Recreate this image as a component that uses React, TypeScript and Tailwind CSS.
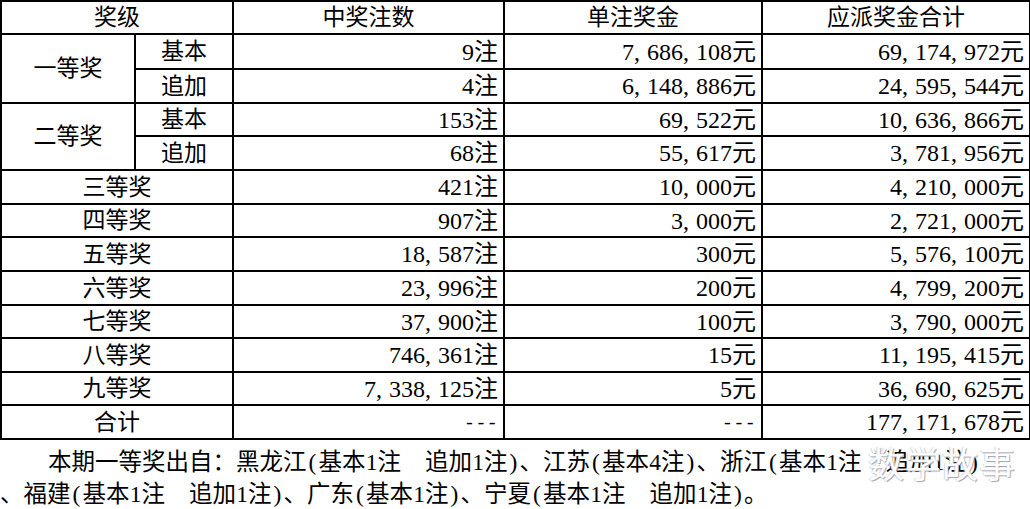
import React from "react";

// numbers like "7,338,125" -> digits with a half-width comma cell, like the source's SimSun
function Num({ v, unit }: { v: string; unit: string }) {
  const parts = v.split(",");
  return (
    <span className="text-[24px]">
      {parts.map((p, i) => (
        <React.Fragment key={i}>
          {i > 0 && <span className="inline-block w-[13px] text-left">,</span>}
          {p}
        </React.Fragment>
      ))}
      {unit}
    </span>
  );
}

// half-width ascii gets a fixed 12px cell
function Line({ text }: { text: string }) {
  const out: React.ReactNode[] = [];
  let buf = "";
  [...text].forEach((ch, i) => {
    if (ch.charCodeAt(0) < 128) {
      if (buf) {
        out.push(buf);
        buf = "";
      }
      out.push(
        <span key={i} className="inline-block w-[12px] text-center">
          {ch === " " ? "\u00a0" : ch}
        </span>
      );
    } else buf += ch;
  });
  if (buf) out.push(buf);
  return <>{out}</>;
}

const rows: { label: string; count: string; unit: string; total: string; h: string }[] = [
  { label: "三等奖", count: "421", unit: "10,000", total: "4,210,000", h: "h-[34px]" },
  { label: "四等奖", count: "907", unit: "3,000", total: "2,721,000", h: "h-[33px]" },
  { label: "五等奖", count: "18,587", unit: "300", total: "5,576,100", h: "h-[34px]" },
  { label: "六等奖", count: "23,996", unit: "200", total: "4,799,200", h: "h-[34px]" },
  { label: "七等奖", count: "37,900", unit: "100", total: "3,790,000", h: "h-[33px]" },
  { label: "八等奖", count: "746,361", unit: "15", total: "11,195,415", h: "h-[34px]" },
  { label: "九等奖", count: "7,338,125", unit: "5", total: "36,690,625", h: "h-[33px]" },
];

const cell = "border-2 border-black p-0 leading-none";
const num = cell + " text-right pr-[5px]";
const mid = cell + " text-center";

export default function App() {
  return (
    <div
      className="w-[1030px] h-[509px] bg-white text-black overflow-hidden relative"
      style={{ fontFamily: '"Liberation Serif", "Noto Sans CJK SC", serif' }}
    >
      <table className="table-fixed border-collapse w-[1029px] text-[23px] border-t border-t-black">
        <colgroup>
          <col className="w-[134px]" />
          <col className="w-[98px]" />
          <col className="w-[271px]" />
          <col className="w-[258px]" />
          <col className="w-[268px]" />
        </colgroup>
        <tbody>
          <tr className="h-[33px]">
            <td colSpan={2} className={mid}>奖级</td>
            <td className={mid}>中奖注数</td>
            <td className={mid}>单注奖金</td>
            <td className={mid}>应派奖金合计</td>
          </tr>
          <tr className="h-[35px]">
            <td rowSpan={2} className={mid}>一等奖</td>
            <td className={mid}>基本</td>
            <td className={num}><Num v="9" unit="注" /></td>
            <td className={num}><Num v="7,686,108" unit="元" /></td>
            <td className={num}><Num v="69,174,972" unit="元" /></td>
          </tr>
          <tr className="h-[34px]">
            <td className={mid}>追加</td>
            <td className={num}><Num v="4" unit="注" /></td>
            <td className={num}><Num v="6,148,886" unit="元" /></td>
            <td className={num}><Num v="24,595,544" unit="元" /></td>
          </tr>
          <tr className="h-[33px]">
            <td rowSpan={2} className={mid}>二等奖</td>
            <td className={mid}>基本</td>
            <td className={num}><Num v="153" unit="注" /></td>
            <td className={num}><Num v="69,522" unit="元" /></td>
            <td className={num}><Num v="10,636,866" unit="元" /></td>
          </tr>
          <tr className="h-[34px]">
            <td className={mid}>追加</td>
            <td className={num}><Num v="68" unit="注" /></td>
            <td className={num}><Num v="55,617" unit="元" /></td>
            <td className={num}><Num v="3,781,956" unit="元" /></td>
          </tr>
          {rows.map((r) => (
            <tr key={r.label} className={r.h}>
              <td colSpan={2} className={mid}>{r.label}</td>
              <td className={num}><Num v={r.count} unit="注" /></td>
              <td className={num}><Num v={r.unit} unit="元" /></td>
              <td className={num}><Num v={r.total} unit="元" /></td>
            </tr>
          ))}
          <tr className="h-[34px]">
            <td colSpan={2} className={mid}>合计</td>
            <td className={num}>
              <span style={{ fontFamily: '"Liberation Mono", monospace' }} className="text-[19px]">---</span>
            </td>
            <td className={num}>
              <span style={{ fontFamily: '"Liberation Mono", monospace' }} className="text-[19px]">---</span>
            </td>
            <td className={num}><Num v="177,171,678" unit="元" /></td>
          </tr>
        </tbody>
      </table>

      <div className="text-[23.5px] leading-[32px] pt-[6px] whitespace-nowrap">
        <div className="pl-[48px]">
          <Line text="本期一等奖出自：黑龙江(基本1注  追加1注)、江苏(基本4注)、浙江(基本1注  追加1注)" />
        </div>
        <div>
          <Line text="、福建(基本1注  追加1注)、广东(基本1注)、宁夏(基本1注  追加1注)。" />
        </div>
      </div>

      <div
        className="absolute left-[868px] top-[444px] text-[36px] leading-none text-white tracking-[1px]"
        style={{ fontFamily: '"Noto Sans CJK SC", sans-serif', textShadow: "1px 1px 1px #9ca3af, -1px 0 1px #d1d5db" }}
      >
        数学故事
      </div>
    </div>
  );
}
